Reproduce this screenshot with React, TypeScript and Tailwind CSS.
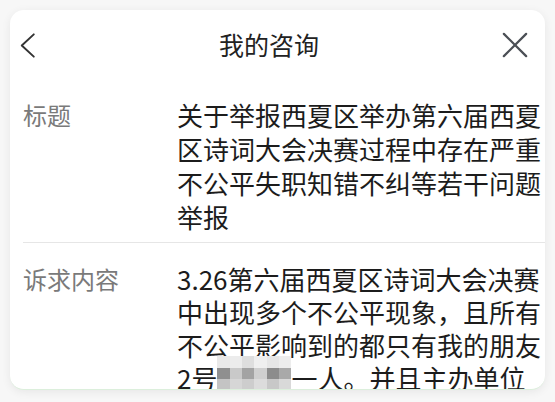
import React from 'react';

const BackIcon = ({ className }: { className?: string }) => (
  <svg className={className} viewBox="0 0 18 28" fill="none" stroke="currentColor" strokeWidth={2.2} strokeLinecap="round" strokeLinejoin="round">
    <path d="M15.5 1.5L2 14l13.5 12.5" />
  </svg>
);

const CloseIcon = ({ className }: { className?: string }) => (
  <svg className={className} viewBox="0 0 28 28" fill="none" stroke="currentColor" strokeWidth={2.4} strokeLinecap="round">
    <path d="M2 2l24 24M26 2L2 26" />
  </svg>
);

// mosaic over the blurred name
const mosaic = [
  ['#e9e9e9', '#ececec', '#dedede', '#efefef', '#e6e6e6', '#ededed'],
  ['#8f8f8f', '#c9c9c9', '#a3a3a3', '#cfcfcf', '#8c8c8c', '#a9a9a9'],
  ['#c4c4c4', '#d6d6d6', '#cdcdcd', '#dcdcdc', '#c8c8c8', '#d9d9d9'],
];

const Mosaic = () => (
  <span className="relative inline-block w-[74px] h-[20px] align-middle">
    <span className="absolute left-0 -top-[16px] grid grid-cols-6 grid-rows-3 w-[74px] h-[35px]">
      {mosaic.flat().map((c, i) => (
        <span key={i} className="block" style={{ backgroundColor: c }} />
      ))}
    </span>
  </span>
);

const Row = ({ label, children, leading }: { label: string; children: React.ReactNode; leading: string }) => (
  <div className="flex">
    <div className={`w-[154px] shrink-0 text-[24px] text-[#7a7a7a] ${leading}`}>{label}</div>
    <div className={`flex-1 pr-[3px] text-[26px] text-[#1c1c1c] break-all ${leading}`}>{children}</div>
  </div>
);

export default function App() {
  return (
    <div className="w-[555px] h-[402px] bg-[#f7f7f7] p-[10px] overflow-hidden" style={{ fontFamily: '"Noto Sans CJK SC", "Noto Sans", sans-serif' }}>
      <div className="h-[380px] bg-white rounded-[14px] shadow-[0_2px_10px_rgba(0,0,0,0.07)] overflow-hidden border-b border-[#dcefdc]">
        <div className="h-[70px] flex items-center justify-between pl-[10px] pr-[17px]">
          <BackIcon className="w-[16px] h-[27px] text-[#333]" />
          <h1 className="text-[25px] text-[#222]">我的咨询</h1>
          <CloseIcon className="w-[26px] h-[26px] text-[#4b4f55]" />
        </div>
        <div className="pl-[13px] pt-[18px]">
          <div className="pb-[8px]">
            <Row label="标题" leading="leading-[34px]">关于举报西夏区举办第六届西夏区诗词大会决赛过程中存在严重不公平失职知错不纠等若干问题举报</Row>
          </div>
          <div className="border-t border-[#e6e6e6] pt-[19px]">
            <Row label="诉求内容" leading="leading-[33px]">
              3.26第六届西夏区诗词大会决赛中出现多个不公平现象，且所有不公平影响到的都只有我的朋友2号<Mosaic />一人。并且主办单位对我们提出的问题置之不理
            </Row>
          </div>
        </div>
      </div>
    </div>
  );
}
